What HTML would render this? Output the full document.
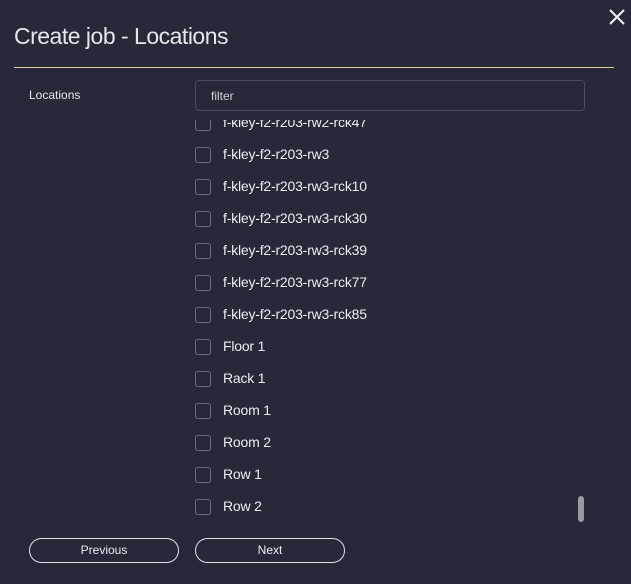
<!DOCTYPE html>
<html><head><style>
html,body{margin:0;padding:0;width:631px;height:584px;background:#272939;overflow:hidden;font-family:"Liberation Sans",sans-serif;color:#e8e8ee}
.title{position:absolute;left:14px;top:23px;font-size:23px;font-weight:300;color:#e6e6ea;letter-spacing:-0.5px}
.close{position:absolute;left:606px;top:6px;width:22px;height:22px}
.hr{position:absolute;left:14px;top:67px;width:600px;height:1px;background:#d9cf9e}
.lbl{position:absolute;left:29px;top:88px;font-size:12px;color:#e6e6ea}
.filter{position:absolute;left:195px;top:80px;border:1px solid #4b4d5c;border-radius:4px;box-sizing:border-box;width:390px;height:31px}
.filter span{position:absolute;left:15px;top:8px;font-size:12px;color:#cfd0d6}
.list{position:absolute;left:190px;top:120px;width:400px;height:408px;overflow:hidden}
.item{position:absolute;left:5px;height:16px}
.cb{position:absolute;left:0;top:0;width:14px;height:14px;border:1px solid #6a6c78;border-radius:3px}
.item span{position:absolute;left:28px;top:-1px;font-size:14px;white-space:nowrap;color:#ececf0;letter-spacing:-0.2px}
.sb{position:absolute;left:578px;top:496px;width:6px;height:26px;background:#9a9aa0;border-radius:3px}
.btn{position:absolute;top:538px;width:150px;height:25px;border:1px solid #e0e0e6;border-radius:13px;box-sizing:border-box;font-size:12px;text-align:center;line-height:23px;color:#ececf0}
</style></head><body>
<div class="title">Create job - Locations</div>
<svg class="close" viewBox="0 0 22 22"><path d="M4 4L18 18M18 4L4 18" stroke="#f0f0f0" stroke-width="2"/></svg>
<div class="hr"></div>
<div class="lbl">Locations</div>
<div class="filter"><span>filter</span></div>
<div class="list">
<div class="item" style="top:-5px"><div class="cb"></div><span>f-kley-f2-r203-rw2-rck47</span></div>
<div class="item" style="top:27px"><div class="cb"></div><span>f-kley-f2-r203-rw3</span></div>
<div class="item" style="top:59px"><div class="cb"></div><span>f-kley-f2-r203-rw3-rck10</span></div>
<div class="item" style="top:91px"><div class="cb"></div><span>f-kley-f2-r203-rw3-rck30</span></div>
<div class="item" style="top:123px"><div class="cb"></div><span>f-kley-f2-r203-rw3-rck39</span></div>
<div class="item" style="top:155px"><div class="cb"></div><span>f-kley-f2-r203-rw3-rck77</span></div>
<div class="item" style="top:187px"><div class="cb"></div><span>f-kley-f2-r203-rw3-rck85</span></div>
<div class="item" style="top:219px"><div class="cb"></div><span>Floor 1</span></div>
<div class="item" style="top:251px"><div class="cb"></div><span>Rack 1</span></div>
<div class="item" style="top:283px"><div class="cb"></div><span>Room 1</span></div>
<div class="item" style="top:315px"><div class="cb"></div><span>Room 2</span></div>
<div class="item" style="top:347px"><div class="cb"></div><span>Row 1</span></div>
<div class="item" style="top:379px"><div class="cb"></div><span>Row 2</span></div>
</div>
<div class="sb"></div>
<div class="btn" style="left:29px">Previous</div>
<div class="btn" style="left:195px">Next</div>
</body></html>
